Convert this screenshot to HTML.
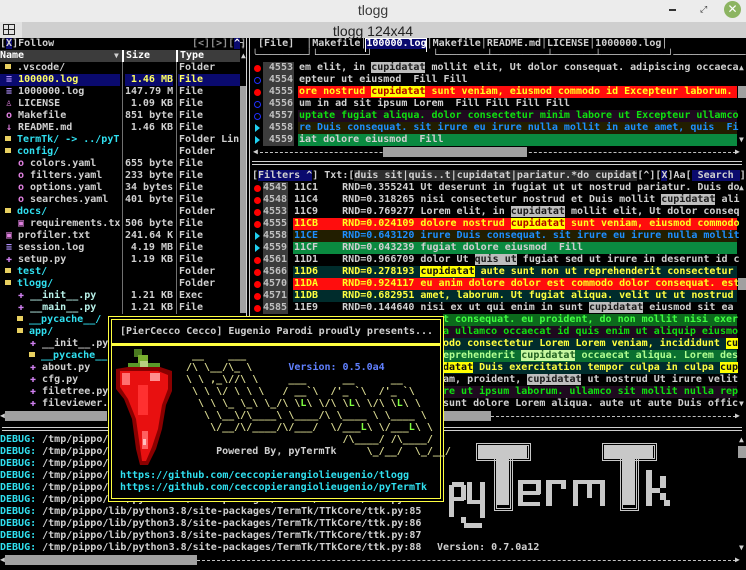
<!DOCTYPE html>
<html><head><meta charset="utf-8">
<style>
*{margin:0;padding:0;box-sizing:border-box}
html,body{width:746px;height:570px;overflow:hidden;background:#000}
body{position:relative;font-family:"DejaVu Sans Mono","Liberation Mono",monospace;font-size:10px;font-weight:bold;color:#d0d0d0}
.t{position:absolute;white-space:pre;line-height:12px;height:12px}
.a{position:absolute}
.nv{background:#0a0a6e}
.gh{background:#bdbdbd;color:#1a1a1a}
.yh{background:#ffff00;color:#b00000}
.yk{background:#ffff00;color:#101010}
.red{background:#ff0d0d;color:#ffff20}
.pur{background:#1e0a1e;color:#10e010}
.oli{background:#221e00;color:#1e8fff}
.grn{background:#0a8a40;color:#d0d0d0}
.tea{background:#002c2c;color:#ffff40}
.g2{background:#0c6a1c;color:#40ff40}
.g3{background:#0a7030;color:#b0ff90}
.cy{color:#30e0f0}
.fo{display:inline-block;width:6px;height:5px;background:#e8d060;vertical-align:1px}
.num{position:absolute;background:#3c3c3c;color:#c0c0c0;text-align:right;height:12px;line-height:12px;padding-right:1px}
.dot{position:absolute;width:7px;height:7px;border-radius:50%;background:#ff0000}
.cir{position:absolute;width:7px;height:7px;border-radius:50%;border:1px solid #2030ff}
.tri{position:absolute;width:0;height:0;border-left:5px solid #20d0f0;border-top:4px solid transparent;border-bottom:4px solid transparent}
.dash{position:absolute;height:0;border-top:1px dashed #c0c0c0}
.thumb{position:absolute;background:#a0a0a0}
.arr{position:absolute;font-size:8px;line-height:12px;color:#d0d0d0}
.hl{position:absolute;height:4px;border-top:1px solid #d0d0d0;border-bottom:1px solid #d0d0d0}
.vl{position:absolute;width:4px;border-left:1px solid #d0d0d0;border-right:1px solid #d0d0d0}
.lg{position:absolute;background:#c8c8c8}
.lo{position:absolute;border:3px double #c8c8c8}
</style></head><body>

<!-- title bars -->
<div class="a" style="left:0;top:0;width:746px;height:22px;background:#ececec"></div>
<div class="a" style="left:0;top:2px;width:746px;text-align:center;font-family:'Liberation Sans',sans-serif;font-weight:normal;font-size:14px;color:#3a3a3a">tlogg</div>
<div class="a" style="left:669px;top:9px;width:7px;height:2px;background:#333"></div>
<div class="a" style="left:700px;top:5px;font:normal 9px 'DejaVu Sans';color:#333">⤢</div>
<div class="a" style="left:724px;top:1px;width:17px;height:17px;border-radius:50%;background:#8cb461;color:#fff;font:bold 12px 'DejaVu Sans';text-align:center;line-height:17px">✕</div>
<div class="a" style="left:0;top:22px;width:746px;height:16px;background:#cfcfcf"></div>
<div class="a" style="left:0;top:22px;width:22px;height:16px;background:#e2e2e2"></div>
<div class="a" style="left:3px;top:24px;width:12px;height:11px;border:1px solid #222"></div>
<div class="a" style="left:8px;top:24px;width:1px;height:11px;background:#222"></div>
<div class="a" style="left:3px;top:29px;width:12px;height:1px;background:#222"></div>
<div class="a" style="left:0;top:23px;width:746px;text-align:center;font-family:'Liberation Sans',sans-serif;font-weight:normal;font-size:14px;color:#222">tlogg 124x44</div>

<!-- LEFT PANEL -->
<div class="t" style="top:38px;left:0">[<span class="nv">X</span>]Follow</div>
<div class="t" style="top:38px;left:192px;color:#909090">[&lt;][&gt;][<span class="nv" style="color:#fff">^</span>]</div>
<div class="t" style="top:38px;left:240px">┐</div>
<div class="a" style="left:0;top:50px;width:240px;height:12px;background:#3c3c3c"></div>
<div class="t" style="top:50px;left:0;color:#fff">Name</div>
<div class="arr" style="top:50px;left:114px">▼</div>
<div class="a" style="left:122px;top:50px;width:2px;height:12px;background:#fff"></div>
<div class="t" style="top:50px;left:126px;color:#fff">Size</div>
<div class="a" style="left:176px;top:50px;width:2px;height:12px;background:#fff"></div>
<div class="t" style="top:50px;left:180px;color:#fff">Type</div>
<div class="arr" style="top:50px;left:241px">▲</div>
<div class="a" style="left:122px;top:62px;width:1px;height:252px;background:#707070"></div>
<div class="a" style="left:176px;top:62px;width:1px;height:252px;background:#707070"></div>
<div class="thumb" style="left:240px;top:86px;width:6px;height:227px"></div>
<div class="a nv" style="left:0;top:74px;width:120px;height:12px"></div>
<div class="a nv" style="left:125px;top:74px;width:48px;height:12px"></div>
<div class="a nv" style="left:178px;top:74px;width:62px;height:12px"></div>

<div class="t" style="top:62px;left:5px"><span class="fo"></span> .vscode/</div>
<div class="t" style="top:74px;left:6px"><span style="color:#b090ff">≡</span> <span style="color:#ffff60">100000.log</span></div>
<div class="t" style="top:86px;left:6px"><span style="color:#b090ff">≡</span> 1000000.log</div>
<div class="t" style="top:98px;left:6px"><span style="color:#e080e0">♙</span> LICENSE</div>
<div class="t" style="top:110px;left:6px"><span style="color:#e080e0">o</span> Makefile</div>
<div class="t" style="top:122px;left:6px"><span style="color:#e080e0">↓</span> README.md</div>
<div class="t cy" style="top:134px;left:5px"><span class="fo"></span> TermTk/ -&gt; ../pyT</div>
<div class="t cy" style="top:146px;left:5px"><span class="fo"></span> config/</div>
<div class="t" style="top:158px;left:18px"><span style="color:#e080e0">o</span> colors.yaml</div>
<div class="t" style="top:170px;left:18px"><span style="color:#e080e0">o</span> filters.yaml</div>
<div class="t" style="top:182px;left:18px"><span style="color:#e080e0">o</span> options.yaml</div>
<div class="t" style="top:194px;left:18px"><span style="color:#e080e0">o</span> searches.yaml</div>
<div class="t cy" style="top:206px;left:5px"><span class="fo"></span> docs/</div>
<div class="t" style="top:218px;left:18px"><span style="color:#e080e0">▣</span> requirements.tx</div>
<div class="t" style="top:230px;left:6px"><span style="color:#e080e0">▣</span> profiler.txt</div>
<div class="t" style="top:242px;left:6px"><span style="color:#b090ff">≡</span> session.log</div>
<div class="t" style="top:254px;left:6px"><span style="color:#d080f0">✚</span> setup.py</div>
<div class="t cy" style="top:266px;left:5px"><span class="fo"></span> test/</div>
<div class="t cy" style="top:278px;left:5px"><span class="fo"></span> tlogg/</div>
<div class="t" style="top:290px;left:18px"><span style="color:#d080f0">✚</span> <span style="color:#b8f0e8">__init__.py</span></div>
<div class="t" style="top:302px;left:18px"><span style="color:#d080f0">✚</span> <span style="color:#b8f0e8">__main__.py</span></div>
<div class="t cy" style="top:314px;left:17px"><span class="fo"></span> __pycache__/</div>
<div class="t cy" style="top:326px;left:17px"><span class="fo"></span> app/</div>
<div class="t" style="top:338px;left:30px"><span style="color:#d080f0">✚</span> __init__.py</div>
<div class="t cy" style="top:350px;left:29px"><span class="fo"></span> __pycache__</div>
<div class="t" style="top:362px;left:30px"><span style="color:#d080f0">✚</span> about.py</div>
<div class="t" style="top:374px;left:30px"><span style="color:#d080f0">✚</span> cfg.py</div>
<div class="t" style="top:386px;left:30px"><span style="color:#d080f0">✚</span> filetree.py</div>
<div class="t" style="top:398px;left:30px"><span style="color:#d080f0">✚</span> fileviewer.</div>

<div class="t" style="top:74px;left:125px;width:48px;text-align:right;color:#ffff60">1.46 MB</div>
<div class="t" style="top:86px;left:125px;width:48px;text-align:right">147.79 M</div>
<div class="t" style="top:98px;left:125px;width:48px;text-align:right">1.09 KB</div>
<div class="t" style="top:110px;left:125px;width:48px;text-align:right">851 byte</div>
<div class="t" style="top:122px;left:125px;width:48px;text-align:right">1.46 KB</div>
<div class="t" style="top:158px;left:125px;width:48px;text-align:right">655 byte</div>
<div class="t" style="top:170px;left:125px;width:48px;text-align:right">233 byte</div>
<div class="t" style="top:182px;left:125px;width:48px;text-align:right">34 bytes</div>
<div class="t" style="top:194px;left:125px;width:48px;text-align:right">401 byte</div>
<div class="t" style="top:218px;left:125px;width:48px;text-align:right">506 byte</div>
<div class="t" style="top:230px;left:125px;width:48px;text-align:right">241.64 K</div>
<div class="t" style="top:242px;left:125px;width:48px;text-align:right">4.19 MB</div>
<div class="t" style="top:254px;left:125px;width:48px;text-align:right">1.19 KB</div>
<div class="t" style="top:290px;left:125px;width:48px;text-align:right">1.21 KB</div>
<div class="t" style="top:302px;left:125px;width:48px;text-align:right">1.21 KB</div>

<div class="t" style="top:62px;left:179px">Folder</div>
<div class="t" style="top:74px;left:179px;color:#ffff60">File</div>
<div class="t" style="top:86px;left:179px">File</div>
<div class="t" style="top:98px;left:179px">File</div>
<div class="t" style="top:110px;left:179px">File</div>
<div class="t" style="top:122px;left:179px">File</div>
<div class="t" style="top:134px;left:179px">Folder Lin</div>
<div class="t" style="top:146px;left:179px">Folder</div>
<div class="t" style="top:158px;left:179px">File</div>
<div class="t" style="top:170px;left:179px">File</div>
<div class="t" style="top:182px;left:179px">File</div>
<div class="t" style="top:194px;left:179px">File</div>
<div class="t" style="top:206px;left:179px">Folder</div>
<div class="t" style="top:218px;left:179px">File</div>
<div class="t" style="top:230px;left:179px">File</div>
<div class="t" style="top:242px;left:179px">File</div>
<div class="t" style="top:254px;left:179px">File</div>
<div class="t" style="top:266px;left:179px">Folder</div>
<div class="t" style="top:278px;left:179px">Folder</div>
<div class="t" style="top:290px;left:179px">Exec</div>
<div class="t" style="top:302px;left:179px">File</div>

<div class="arr" style="top:410px;left:0">◀</div>
<div class="thumb" style="left:5px;top:411px;width:102px;height:10px"></div>
<div class="vl" style="left:246px;top:38px;height:390px"></div>

<!-- RIGHT TOP -->
<div class="t" style="top:38px;left:252px"> [File]  │Makefile│<span class="nv" style="color:#fff">100000.log</span>│Makefile│README.md│LICENSE│1000000.log│</div>
<div class="t" style="top:50px;left:252px;color:#c0c0c0">╰────────┘└────────┘          └────────┴─────────┴───────┴───────────┘────────────</div>
<div class="a" style="left:365px;top:38px;width:62px;height:14px;border:1px solid #fff;border-bottom:none"></div>

<div class="dot" style="left:254px;top:65px"></div>
<div class="cir" style="left:254px;top:77px"></div>
<div class="dot" style="left:254px;top:89px"></div>
<div class="cir" style="left:254px;top:101px"></div>
<div class="cir" style="left:254px;top:113px"></div>
<div class="tri" style="left:255px;top:124px"></div>
<div class="tri" style="left:255px;top:136px"></div>
<div class="num" style="left:263px;top:62px;width:31px">4553</div>
<div class="num" style="left:263px;top:74px;width:31px">4554</div>
<div class="num" style="left:263px;top:86px;width:31px">4555</div>
<div class="num" style="left:263px;top:98px;width:31px">4556</div>
<div class="num" style="left:263px;top:110px;width:31px">4557</div>
<div class="num" style="left:263px;top:122px;width:31px">4558</div>
<div class="num" style="left:263px;top:134px;width:31px">4559</div>
<div class="t" style="top:62px;left:299px">em elit, in <span class="gh">cupidatat</span> mollit elit, Ut dolor consequat. adipiscing occaeca</div>
<div class="t" style="top:74px;left:299px">epteur ut eiusmod  Fill Fill</div>
<div class="t red" style="top:86px;left:298px;width:439px;padding-left:1px">ore nostrud <span class="yh">cupidatat</span> sunt veniam, eiusmod commodo id Excepteur laborum.</div>
<div class="t" style="top:98px;left:299px">um in ad sit ipsum Lorem  Fill Fill Fill Fill</div>
<div class="t pur" style="top:110px;left:298px;width:439px;padding-left:1px">uptate fugiat aliqua. dolor consectetur minim labore ut Excepteur ullamco</div>
<div class="t oli" style="top:122px;left:298px;width:439px;padding-left:1px">re Duis consequat. sit irure eu irure nulla mollit in aute amet, quis  Fi</div>
<div class="t grn" style="top:134px;left:298px;width:439px;padding-left:1px">iat dolore eiusmod  Fill</div>
<div class="arr" style="top:62px;left:739px">▲</div>
<div class="thumb" style="left:738px;top:86px;width:8px;height:12px"></div>
<div class="arr" style="top:134px;left:739px">▼</div>
<div class="arr" style="top:146px;left:253px">◀</div>
<div class="dash" style="left:260px;top:152px;width:476px"></div>
<div class="thumb" style="left:383px;top:147px;width:144px;height:10px"></div>
<div class="arr" style="top:146px;left:735px">▶</div>
<div class="hl" style="left:252px;top:161px;width:490px"></div>

<!-- filters -->
<div class="t" style="top:170px;left:252px">[<span class="nv">Filters ^</span>] Txt:[<span style="background:#2e2e2e">duis sit|quis..t|cupidatat|pariatur.*do cupidat</span>[^][<span class="nv">X</span>]Aa[<span class="nv"> Search </span>]</div>
<div class="dot" style="left:254px;top:185px"></div>
<div class="dot" style="left:254px;top:197px"></div>
<div class="dot" style="left:254px;top:209px"></div>
<div class="dot" style="left:254px;top:221px"></div>
<div class="tri" style="left:255px;top:232px"></div>
<div class="tri" style="left:255px;top:244px"></div>
<div class="dot" style="left:254px;top:257px"></div>
<div class="dot" style="left:254px;top:269px"></div>
<div class="dot" style="left:254px;top:281px"></div>
<div class="dot" style="left:254px;top:293px"></div>
<div class="dot" style="left:254px;top:305px"></div>
<div class="num" style="left:263px;top:182px;width:25px">4545</div>
<div class="num" style="left:263px;top:194px;width:25px">4548</div>
<div class="num" style="left:263px;top:206px;width:25px">4553</div>
<div class="num" style="left:263px;top:218px;width:25px">4555</div>
<div class="num" style="left:263px;top:230px;width:25px">4558</div>
<div class="num" style="left:263px;top:242px;width:25px">4559</div>
<div class="num" style="left:263px;top:254px;width:25px">4561</div>
<div class="num" style="left:263px;top:266px;width:25px">4566</div>
<div class="num" style="left:263px;top:278px;width:25px">4570</div>
<div class="num" style="left:263px;top:290px;width:25px">4571</div>
<div class="num" style="left:263px;top:302px;width:25px">4585</div>
<div class="t" style="top:182px;left:294px">11C1    RND=0.355241 Ut deserunt in fugiat ut ut nostrud pariatur. Duis do</div>
<div class="t" style="top:194px;left:294px">11C4    RND=0.318265 nisi consectetur nostrud et Duis mollit <span class="gh">cupidatat</span> ali</div>
<div class="t" style="top:206px;left:294px">11C9    RND=0.769277 Lorem elit, in <span class="gh">cupidatat</span> mollit elit, Ut dolor conseq</div>
<div class="t red" style="top:218px;left:293px;width:444px;padding-left:1px">11CB    RND=0.024109 dolore nostrud <span class="yh">cupidatat</span> sunt veniam, eiusmod commodo</div>
<div class="t oli" style="top:230px;left:293px;width:444px;padding-left:1px">11CE    RND=0.643120 irure Duis consequat. sit irure eu irure nulla mollit</div>
<div class="t grn" style="top:242px;left:293px;width:444px;padding-left:1px">11CF    RND=0.043239 fugiat dolore eiusmod  Fill</div>
<div class="t" style="top:254px;left:294px">11D1    RND=0.966709 dolor Ut <span class="gh">quis ut</span> fugiat sed ut irure in deserunt id c</div>
<div class="t tea" style="top:266px;left:293px;width:444px;padding-left:1px">11D6    RND=0.278193 <span class="yk">cupidatat</span> aute sunt non ut reprehenderit consectetur</div>
<div class="t red" style="top:278px;left:293px;width:444px;padding-left:1px">11DA    RND=0.924117 eu anim dolore dolor est commodo dolor consequat. est</div>
<div class="t tea" style="top:290px;left:293px;width:444px;padding-left:1px">11DB    RND=0.682951 amet, laborum. Ut fugiat aliqua. velit ut ut nostrud</div>
<div class="t" style="top:302px;left:294px">11E9    RND=0.144640 nisi ex ut qui enim in sunt <span class="gh">cupidatat</span> eiusmod sit ea</div>
<div class="t g2" style="top:314px;left:443px;width:294px">t consequat. eu proident, do non mollit nisi exer</div>
<div class="t pur" style="top:326px;left:443px;width:294px">a ullamco occaecat id quis enim ut aliquip eiusmo</div>
<div class="t tea" style="top:338px;left:443px;width:294px">odo consectetur Lorem Lorem veniam, incididunt <span class="yk">cu</span></div>
<div class="t g3" style="top:350px;left:443px;width:294px">eprehenderit <span style="background:#c8f8a0;color:#206020">cupidatat</span> occaecat aliqua. Lorem des</div>
<div class="t tea" style="top:362px;left:443px;width:294px"><span class="yk">datat</span> Duis exercitation tempor culpa in culpa <span class="yk">cup</span></div>
<div class="t" style="top:374px;left:443px">am, proident, <span class="gh">cupidatat</span> ut nostrud Ut irure velit</div>
<div class="t pur" style="top:386px;left:443px;width:294px">re ut ipsum laborum. ullamco sit mollit nulla rep</div>
<div class="t" style="top:398px;left:443px">sunt dolore Lorem aliqua. aute ut aute Duis offic</div>
<div class="arr" style="top:182px;left:739px">▲</div>
<div class="thumb" style="left:738px;top:278px;width:8px;height:12px"></div>
<div class="arr" style="top:398px;left:739px">▼</div>
<div class="thumb" style="left:443px;top:411px;width:48px;height:10px"></div>
<div class="dash" style="left:491px;top:416px;width:245px"></div>
<div class="arr" style="top:410px;left:735px">▶</div>
<div class="hl" style="left:2px;top:427px;width:740px"></div>

<!-- DEBUG -->
<div class="t" style="top:434px;left:0"><span class="cy">DEBUG:</span> /tmp/pippo/lib/python3.8/site-packages/TermTk/TTkCore/ttk.py:79</div>
<div class="t" style="top:446px;left:0"><span class="cy">DEBUG:</span> /tmp/pippo/lib/python3.8/site-packages/TermTk/TTkCore/ttk.py:80</div>
<div class="t" style="top:458px;left:0"><span class="cy">DEBUG:</span> /tmp/pippo/lib/python3.8/site-packages/TermTk/TTkCore/ttk.py:81</div>
<div class="t" style="top:470px;left:0"><span class="cy">DEBUG:</span> /tmp/pippo/lib/python3.8/site-packages/TermTk/TTkCore/ttk.py:82</div>
<div class="t" style="top:482px;left:0"><span class="cy">DEBUG:</span> /tmp/pippo/lib/python3.8/site-packages/TermTk/TTkCore/ttk.py:83</div>
<div class="t" style="top:494px;left:0"><span class="cy">DEBUG:</span> /tmp/pippo/lib/python3.8/site-packages/TermTk/TTkCore/ttk.py:84</div>
<div class="t" style="top:506px;left:0"><span class="cy">DEBUG:</span> /tmp/pippo/lib/python3.8/site-packages/TermTk/TTkCore/ttk.py:85</div>
<div class="t" style="top:518px;left:0"><span class="cy">DEBUG:</span> /tmp/pippo/lib/python3.8/site-packages/TermTk/TTkCore/ttk.py:86</div>
<div class="t" style="top:530px;left:0"><span class="cy">DEBUG:</span> /tmp/pippo/lib/python3.8/site-packages/TermTk/TTkCore/ttk.py:87</div>
<div class="t" style="top:542px;left:0"><span class="cy">DEBUG:</span> /tmp/pippo/lib/python3.8/site-packages/TermTk/TTkCore/ttk.py:88</div>
<div class="t" style="top:542px;left:437px">Version: 0.7.0a12</div>
<div class="arr" style="top:554px;left:0">◀</div>
<div class="thumb" style="left:5px;top:555px;width:192px;height:10px"></div>
<div class="dash" style="left:197px;top:560px;width:539px"></div>
<div class="arr" style="top:554px;left:735px">▶</div>
<div class="arr" style="top:434px;left:739px">▲</div>
<div class="thumb" style="left:738px;top:446px;width:8px;height:12px"></div>
<div class="arr" style="top:542px;left:739px">▼</div>

<!-- pyTermTk logo -->
<div class="lo" style="left:476px;top:443px;width:55px;height:18px"></div>
<div class="lo" style="left:494px;top:455px;width:19px;height:56px"></div>
<div class="lg" style="left:479px;top:446px;width:48px;height:12px"></div>
<div class="lg" style="left:497px;top:446px;width:12px;height:59px"></div>
<div class="lo" style="left:602px;top:443px;width:55px;height:18px"></div>
<div class="lo" style="left:620px;top:455px;width:19px;height:56px"></div>
<div class="lg" style="left:605px;top:446px;width:48px;height:12px"></div>
<div class="lg" style="left:623px;top:446px;width:12px;height:59px"></div>
<!-- p -->
<div class="lg" style="left:449px;top:485px;width:5px;height:32px"></div>
<div class="lg" style="left:452px;top:482px;width:12px;height:5px"></div>
<div class="lg" style="left:461px;top:485px;width:5px;height:15px"></div>
<div class="lg" style="left:452px;top:497px;width:12px;height:4px"></div>
<!-- y -->
<div class="lg" style="left:467px;top:482px;width:5px;height:22px"></div>
<div class="lg" style="left:480px;top:482px;width:5px;height:36px"></div>
<div class="lg" style="left:467px;top:500px;width:15px;height:4px"></div>
<div class="lg" style="left:461px;top:517px;width:5px;height:6px"></div>
<div class="lg" style="left:464px;top:523px;width:18px;height:5px"></div>
<!-- e -->
<div class="lg" style="left:518px;top:480px;width:22px;height:4px"></div>
<div class="lg" style="left:518px;top:480px;width:5px;height:26px"></div>
<div class="lg" style="left:536px;top:480px;width:5px;height:14px"></div>
<div class="lg" style="left:518px;top:491px;width:22px;height:4px"></div>
<div class="lg" style="left:518px;top:502px;width:22px;height:4px"></div>
<!-- r -->
<div class="lg" style="left:546px;top:480px;width:6px;height:26px"></div>
<div class="lg" style="left:546px;top:480px;width:20px;height:4px"></div>
<div class="lg" style="left:561px;top:480px;width:5px;height:9px"></div>
<!-- m -->
<div class="lg" style="left:573px;top:480px;width:5px;height:26px"></div>
<div class="lg" style="left:573px;top:480px;width:32px;height:4px"></div>
<div class="lg" style="left:587px;top:480px;width:5px;height:18px"></div>
<div class="lg" style="left:600px;top:480px;width:5px;height:26px"></div>
<!-- k -->
<div class="lg" style="left:646px;top:470px;width:6px;height:36px"></div>
<div class="lg" style="left:652px;top:488px;width:8px;height:5px"></div>
<div class="lg" style="left:660px;top:476px;width:6px;height:12px"></div>
<div class="lg" style="left:660px;top:493px;width:6px;height:7px"></div>
<div class="lg" style="left:664px;top:500px;width:6px;height:6px"></div>

<!-- POPUP -->
<div class="a" style="left:108px;top:316px;width:336px;height:186px;background:#000;border:4px double #ffff40"></div>
<div class="a" style="left:111px;top:343px;width:330px;height:3px;background:#ffff40"></div>
<div class="t" style="top:326px;left:120px">[PierCecco Cecco] Eugenio Parodi proudly presents...</div>
<svg class="a" style="left:114px;top:349px" width="60" height="118" viewBox="0 0 60 118">
<rect x="20" y="0" width="8" height="8" fill="#4a7a20"/>
<rect x="24" y="6" width="10" height="8" fill="#7ab030"/>
<rect x="14" y="14" width="32" height="10" fill="#5a9a28"/>
<rect x="26" y="12" width="8" height="6" fill="#b8d080"/>
<polygon points="2,20 14,18 46,18 58,22 58,42 52,56 48,80 42,100 34,116 26,116 22,100 18,70 10,50 2,40" fill="#8a0000"/>
<polygon points="6,22 16,22 44,22 54,26 54,40 48,56 44,80 38,98 32,112 28,112 26,98 22,70 14,50 6,38" fill="#e81010"/>
<rect x="8" y="24" width="8" height="12" fill="#ff7070"/>
<rect x="36" y="24" width="10" height="8" fill="#ff9090"/>
<rect x="24" y="36" width="10" height="30" fill="#ff3030"/>
<rect x="28" y="82" width="6" height="18" fill="#ff6060"/>
<rect x="29" y="90" width="3" height="6" fill="#ffc0c0"/>
</svg>
<div class="t" style="top:350px;left:186px;color:#d8d890"> __    ___</div>
<div class="t" style="top:362px;left:186px;color:#d8d890">/\ \__/\_ \      <span style="color:#6080ff">Version: 0.5.0a4</span></div>
<div class="t" style="top:374px;left:186px;color:#d8d890">\ \ ,_\//\ \     ___      __      __</div>
<div class="t" style="top:386px;left:186px;color:#d8d890"> \ \ \/ \ \ \   / __`\  /'_ `\  /'_ `\</div>
<div class="t" style="top:398px;left:186px;color:#d8d890">  \ \ \_ \_\ \_/\ \<span style="color:#80ff40">L</span>\ \/\ \<span style="color:#80ff40">L</span>\ \/\ \<span style="color:#80ff40">L</span>\ \</div>
<div class="t" style="top:410px;left:186px;color:#d8d890">   \ \__\/\____\ \____/\ \____ \ \____ \</div>
<div class="t" style="top:422px;left:186px;color:#d8d890">    \/__/\/____/\/___/  \/___<span style="color:#80ff40">L</span>\ \/___<span style="color:#80ff40">L</span>\ \</div>
<div class="t" style="top:434px;left:186px;color:#d8d890">                          /\____/ /\____/</div>
<div class="t" style="top:446px;left:186px;color:#d8d890">     <span style="color:#d0d0d0">Powered By, pyTermTk</span>     \_/__/  \_/__/</div>
<div class="t cy" style="top:470px;left:120px">https://github.com/ceccopierangiolieugenio/tlogg</div>
<div class="t cy" style="top:482px;left:120px">https://github.com/ceccopierangiolieugenio/pyTermTk</div>

</body></html>
